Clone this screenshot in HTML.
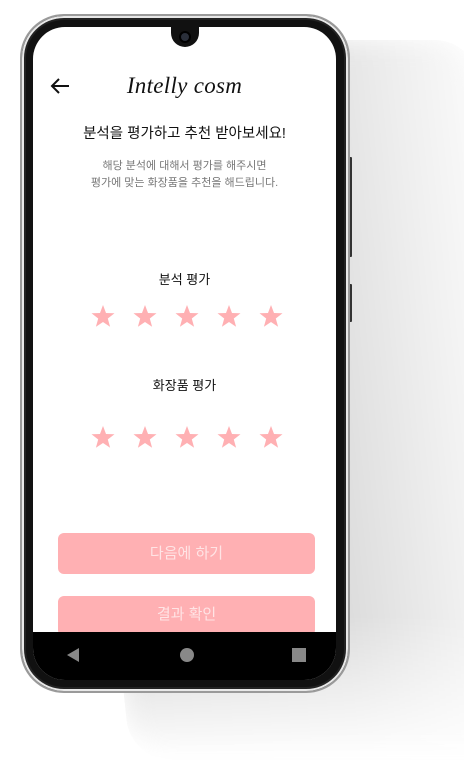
<!DOCTYPE html>
<html><head><meta charset="utf-8"><style>
*{margin:0;padding:0;box-sizing:border-box}
body{width:464px;height:772px;background:#fff;position:relative;overflow:hidden;font-family:"Liberation Sans","Noto Sans CJK KR",sans-serif}
.shadow{position:absolute;left:55px;top:40px;width:420px;height:720px;background:linear-gradient(90deg,#d0d0d0 0%,#dcdcdc 55%,#eeeeee 80%,#fbfbfb 100%);transform:skewX(6deg);transform-origin:top;filter:blur(12px);border-radius:40px;-webkit-mask-image:linear-gradient(180deg,#000 80%,transparent 100%)}
.phone{position:absolute;left:20px;top:14px;width:330px;height:679px;border-radius:44px;background:#111;border:2px solid #9a9a9a;box-shadow:inset 0 0 0 2px #e8e8e8,inset 0 0 0 4px #222}
.screen{position:absolute;left:33px;top:27px;width:303px;height:653px;border-radius:32px;background:#fff;overflow:hidden}
.notch{position:absolute;left:171px;top:27px;width:28px;height:20px;background:#111;border-radius:0 0 14px 14px}
.cam{position:absolute;left:179px;top:31px;width:12px;height:12px;border-radius:50%;background:#2a2f3a;border:2px solid #000}
.t{position:absolute;width:303px;text-align:center;left:0}
.btn{position:absolute;left:25px;width:257px;background:#ffb0b3;border-radius:6px;color:#ffe4e5;font-size:15px;text-align:center}
.nav{position:absolute;left:0;top:605px;width:303px;height:48px;background:#000}
.side{position:absolute;left:349px;width:3px;background:#333;border-radius:1px}
</style></head><body>
<div class="shadow"></div>
<div class="side" style="top:157px;height:100px"></div>
<div class="side" style="top:284px;height:38px"></div>
<div class="phone"></div>
<div class="screen">
  <svg style="position:absolute;left:17px;top:50px" width="20" height="18" viewBox="0 0 20 18"><path d="M19 9H2M9 2L2 9l7 7" stroke="#111" stroke-width="2" fill="none"/></svg>
  <div class="t" style="top:46px;font-family:'Liberation Serif',serif;font-style:italic;font-size:23px;color:#111;letter-spacing:0.3px">Intelly cosm</div>
  <div class="t" style="top:95px;font-size:14.5px;color:#111">분석을 평가하고 추천 받아보세요!</div>
  <div class="t" style="top:131px;font-size:11px;color:#777;line-height:17px">해당 분석에 대해서 평가를 해주시면<br>평가에 맞는 화장품을 추천을 해드립니다.</div>
  <div class="t" style="top:242px;font-size:13px;color:#111">분석 평가</div>
  <div class="t" style="top:348px;font-size:13px;color:#111">화장품 평가</div>
  <div class="btn" style="top:506px;height:41px;line-height:41px">다음에 하기</div>
  <div class="btn" style="top:569px;height:40px;line-height:38px">결과 확인</div>
  <div class="nav">
    <svg style="position:absolute;left:33px;top:15px" width="14" height="16"><path d="M13 1L1 8l12 7z" fill="#888"/></svg>
    <div style="position:absolute;left:147px;top:16px;width:14px;height:14px;border-radius:50%;background:#888"></div>
    <div style="position:absolute;left:259px;top:16px;width:14px;height:14px;background:#888"></div>
  </div>
</div>
<div class="notch"></div><div class="cam"></div>
<svg width="464" height="772" style="position:absolute;left:0;top:0">
<defs><path id="s" d="M0,-12L3,-4L11.5,-3.7L4.8,1.5L7.1,9.8L0,5L-7.1,9.8L-4.8,1.5L-11.5,-3.7L-3,-4Z" fill="#ffb0b3"/></defs>
<use href="#s" x="103" y="317"/><use href="#s" x="145" y="317"/><use href="#s" x="187" y="317"/><use href="#s" x="229" y="317"/><use href="#s" x="271" y="317"/>
<use href="#s" x="103" y="438"/><use href="#s" x="145" y="438"/><use href="#s" x="187" y="438"/><use href="#s" x="229" y="438"/><use href="#s" x="271" y="438"/>
</svg>
</body></html>
